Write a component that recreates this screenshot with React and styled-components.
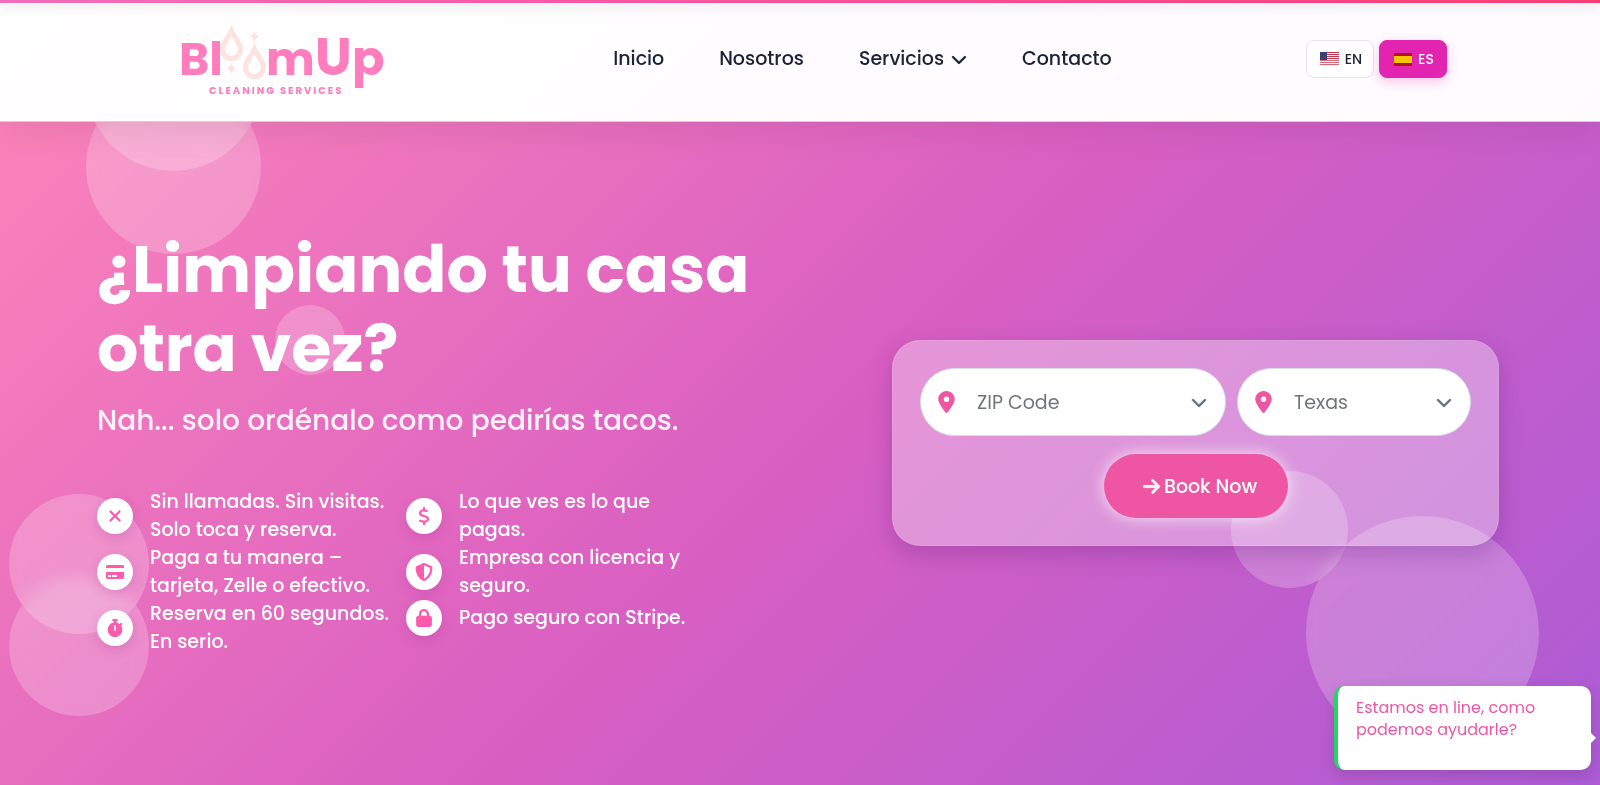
import React from "react";
import styled, { createGlobalStyle } from "styled-components";
import {
  FaXmark,
  FaDollarSign,
  FaShieldHalved,
  FaLock,
  FaArrowRight,
  FaStopwatch,
  FaChevronDown,
  FaLocationDot,
} from "react-icons/fa6";
import { FaCreditCard } from "react-icons/fa";

const GlobalStyle = createGlobalStyle`
  *, *::before, *::after { box-sizing: border-box; }
  body {
    margin: 0;
    font-family: Poppins, Inter, "Liberation Sans", sans-serif;
    color: #1a2238;
    overflow: hidden;
  }
  button, select { font-family: inherit; }
`;

const Page = styled.div`
  display: flex;
  flex-direction: column;
  min-height: 100vh;
  position: relative;
  overflow: hidden;
  background: linear-gradient(135deg, #fe86b9 0%, #d95fc2 52%, #a85bd7 104%);
`;

const Header = styled.header`
  position: relative;
  z-index: 3;
  height: 122px;
  background: linear-gradient(135deg, #fffefe, #fefbff);
  border-bottom: 1px solid rgba(214, 160, 200, 0.6);
  box-shadow: 0 8px 32px rgba(0, 0, 0, 0.08);
`;

const Strip = styled.div`
  height: 3px;
  background: linear-gradient(90deg, #f06eb8, #fb5299, #fb3d74);
  box-shadow: 0 3px 12px rgba(0, 0, 0, 0.18);
`;

const HeaderRow = styled.div`
  display: flex;
  align-items: flex-start;
  justify-content: space-between;
  max-width: 1320px;
  margin: 0 auto;
  padding: 0 13px 0 37px;
`;

const LogoLink = styled.a`
  display: block;
  padding-top: 17px;
  svg { display: block; }
`;

const Nav = styled.nav`
  display: flex;
  gap: 55px;
  padding: 42px 0 0 34px;
`;

const NavLink = styled.a`
  display: flex;
  align-items: center;
  gap: 7px;
  font-size: 19px;
  line-height: 28px;
  font-weight: 500;
  color: #1a2238;
  text-decoration: none;
`;

const LangGroup = styled.div`
  display: flex;
  gap: 5px;
  padding-top: 37px;
`;

const LangButton = styled.button`
  display: flex;
  align-items: center;
  justify-content: center;
  gap: 6px;
  width: 68px;
  height: 38px;
  padding: 0 0 0 2px;
  border-radius: 8px;
  border: 1px solid ${(p) => (p.$active ? "#e224b0" : "#e6e3e8")};
  background: ${(p) => (p.$active ? "#e224b0" : "#fff")};
  color: ${(p) => (p.$active ? "#fff" : "#1a2238")};
  box-shadow: ${(p) => (p.$active ? "0 4px 12px rgba(226, 36, 176, 0.25)" : "none")};
  font-size: 14px;
  font-weight: 500;
`;

const Hero = styled.main`
  position: relative;
  flex: 1;
  display: flex;
  align-items: flex-start;
`;

const Bubbles = styled.div`
  position: absolute;
  inset: 0;
`;

const Bubble = styled.span`
  position: absolute;
  left: ${(p) => p.$x}px;
  top: ${(p) => p.$y}px;
  width: ${(p) => p.$size}px;
  height: ${(p) => p.$size}px;
  border-radius: 50%;
  background: rgba(255, 255, 255, 0.22);
  backdrop-filter: blur(8px);
`;

const HeroGrid = styled.div`
  position: relative;
  width: 100%;
  display: grid;
  grid-template-columns: minmax(0, 1fr) minmax(0, 607px);
  gap: 56px;
  align-items: center;
  padding: 108px 101px 0 97px;
`;

const Title = styled.h1`
  margin: 0;
  font-size: 65px;
  line-height: 79px;
  font-weight: 700;
  color: #fff;
`;

const Subtitle = styled.p`
  margin: 13px 0 47px;
  font-size: 28px;
  line-height: 40px;
  font-weight: 500;
  color: rgba(255, 255, 255, 0.9);
`;

const Features = styled.div`
  display: grid;
  grid-template-columns: 1fr 1fr;
  gap: 6px;
  max-width: 612px;
`;

const FeatureList = styled.ul`
  list-style: none;
  margin: 0;
  padding: 0;
`;

const Feature = styled.li`
  display: flex;
  align-items: center;
  gap: 17px;
  font-size: 19px;
  line-height: 28px;
  font-weight: 500;
  color: #fff;
`;

const FeatureIcon = styled.span`
  flex: none;
  display: flex;
  align-items: center;
  justify-content: center;
  width: 36px;
  height: 36px;
  border-radius: 50%;
  background: #fff;
  color: #ff5aac;
  box-shadow: 0 4px 12px rgba(160, 40, 140, 0.22);
  svg {
    width: auto;
    height: 18px;
  }
`;

const BookingCard = styled.form`
  display: flex;
  flex-direction: column;
  align-items: center;
  gap: 18px;
  padding: 27px;
  border: 1px solid rgba(255, 255, 255, 0.1);
  border-radius: 28px;
  background: rgba(255, 255, 255, 0.34);
  box-shadow: 0 8px 24px rgba(60, 10, 90, 0.22);
`;

const FieldRow = styled.div`
  display: grid;
  grid-template-columns: 306fr 234fr;
  gap: 11px;
  width: 100%;
`;

const Field = styled.label`
  position: relative;
  display: flex;
  align-items: center;
  height: 68px;
  border: 1px solid #d5dcea;
  border-radius: 34px;
  background: #fff;
  svg {
    position: absolute;
    width: auto;
    pointer-events: none;
  }
  svg:first-child {
    left: 17px;
    width: 17px;
    height: 22px;
    color: #ee56a4;
  }
  svg:last-child {
    right: 18px;
    height: 16px;
    color: #64707d;
    stroke: currentColor;
    stroke-width: 12px;
  }
`;

const Select = styled.select`
  appearance: none;
  width: 100%;
  height: 100%;
  padding: 0 48px 0 56px;
  border: 0;
  border-radius: 34px;
  background: transparent;
  color: #6f7479;
  font-size: 19px;
`;

const BookButton = styled.button`
  display: flex;
  align-items: center;
  justify-content: center;
  gap: 3px;
  width: 184px;
  height: 64px;
  padding: 0 0 0 8px;
  border: 0;
  border-radius: 32px;
  background: #ee56a4;
  color: #fff;
  font-size: 19px;
  font-weight: 500;
  box-shadow: 0 0 16px rgba(255, 255, 255, 0.75);
  svg {
    stroke: currentColor;
    stroke-width: 12px;
  }
`;

const ChatBubble = styled.aside`
  position: absolute;
  z-index: 4;
  right: 9px;
  bottom: 15px;
  width: 257px;
  height: 84px;
  padding: 11px 18px;
  border-left: 4px solid #25d366;
  border-radius: 10px;
  background: #fff;
  color: #ee56a4;
  font-size: 16px;
  line-height: 22px;
  box-shadow: 0 4px 14px rgba(0, 0, 0, 0.15);
  &::after {
    content: "";
    position: absolute;
    right: -5px;
    top: 46px;
    border: 6px solid transparent;
    border-right-width: 0;
    border-left-color: #fff;
  }
`;

const Logo = () => (
  <svg width="208" height="82" viewBox="0 0 208 82" role="img" aria-label="BloomUp Cleaning Services">
    <g fill="#ff7dbd" fontFamily="Poppins, Lato, sans-serif" fontWeight="700">
      <text x="2" y="55" fontSize="46">Bl</text>
      <text x="89" y="55" fontSize="46">m</text>
      <text x="138" y="55" fontSize="52">U</text>
      <text x="175" y="55" fontSize="48">p</text>
    </g>
    <g fill="none" stroke="#fde3df" strokeWidth="5">
      <path d="M54.500 11 C51 19 45.500 23 45.500 29.500 a9 9 0 0 0 18 0 C63.500 23 58 19 54.500 11 Z" />
      <path d="M77.500 29 C74 37 68.500 41 68.500 47.500 a9 9 0 0 0 18 0 C86.500 41 81 37 77.500 29 Z" />
    </g>
    <g fill="#fde3df">
      <path d="M77.500 11 Q78.500 15.500 82.500 16.500 Q78.500 17.500 77.500 22 Q76.500 17.500 72.500 16.500 Q76.500 15.500 77.500 11Z" />
      <path d="M54.500 43 Q55.500 47.500 59.500 48.500 Q55.500 49.500 54.500 54 Q53.500 49.500 49.500 48.500 Q53.500 47.500 54.500 43Z" />
    </g>
    <text x="32" y="74" fill="#ff7dbd" fontFamily="Poppins, Lato, sans-serif" fontWeight="700" fontSize="10" letterSpacing="2">
      CLEANING SERVICES
    </text>
  </svg>
);

const FlagUS = () => (
  <svg width="19" height="14" viewBox="0 0 19 14" aria-hidden="true">
    <rect width="19" height="14" fill="#f3eef0" />
    {[0, 1, 2, 3, 4, 5, 6].map((i) => (
      <rect key={i} y={i * 2} width="19" height="1" fill={i < 4 ? "#bf3a50" : "#cf6c7c"} />
    ))}
    <rect width="7" height="8" fill="#3f3d72" />
  </svg>
);

const FlagES = () => (
  <svg width="18" height="13" viewBox="0 0 18 13" aria-hidden="true">
    <rect width="18" height="13" fill="#b0151f" />
    <rect y="3" width="18" height="7" fill="#f5c400" />
  </svg>
);

const bubbles = [
  { x: 86, y: -43, size: 175 },
  { x: 86, y: -126, size: 175 },
  { x: 275, y: 183, size: 70 },
  { x: 9, y: 454, size: 140 },
  { x: 9, y: 372, size: 140 },
  { x: 1306, y: 394, size: 233 },
  { x: 1231, y: 349, size: 117 },
];

const featureColumns = [
  [
    { icon: <FaXmark />, text: "Sin llamadas. Sin visitas. Solo toca y reserva." },
    { icon: <FaCreditCard />, text: "Paga a tu manera – tarjeta, Zelle o efectivo." },
    { icon: <FaStopwatch />, text: "Reserva en 60 segundos. En serio." },
  ],
  [
    { icon: <FaDollarSign />, text: "Lo que ves es lo que pagas." },
    { icon: <FaShieldHalved />, text: "Empresa con licencia y seguro." },
    { icon: <FaLock />, text: "Pago seguro con Stripe." },
  ],
];

export default function App() {
  return (
    <Page>
      <GlobalStyle />
      <Header>
        <Strip />
        <HeaderRow>
          <LogoLink href="#inicio"><Logo /></LogoLink>
          <Nav>
            <NavLink href="#inicio">Inicio</NavLink>
            <NavLink href="#nosotros">Nosotros</NavLink>
            <NavLink href="#servicios">Servicios <FaChevronDown size={16} stroke="currentColor" strokeWidth={8} /></NavLink>
            <NavLink href="#contacto">Contacto</NavLink>
          </Nav>
          <LangGroup>
            <LangButton type="button"><FlagUS />EN</LangButton>
            <LangButton type="button" $active><FlagES />ES</LangButton>
          </LangGroup>
        </HeaderRow>
      </Header>
      <Hero>
        <Bubbles aria-hidden="true">
          {bubbles.map((b, i) => (
            <Bubble key={i} $x={b.x} $y={b.y} $size={b.size} />
          ))}
        </Bubbles>
        <HeroGrid>
          <section>
            <Title>¿Limpiando tu casa otra vez?</Title>
            <Subtitle>Nah... solo ordénalo como pedirías tacos.</Subtitle>
            <Features>
              {featureColumns.map((items, c) => (
                <FeatureList key={c}>
                  {items.map((f) => (
                    <Feature key={f.text}>
                      <FeatureIcon>{f.icon}</FeatureIcon>
                      <span>{f.text}</span>
                    </Feature>
                  ))}
                </FeatureList>
              ))}
            </Features>
          </section>
          <BookingCard onSubmit={(e) => e.preventDefault()}>
            <FieldRow>
              <Field>
                <FaLocationDot />
                <Select aria-label="ZIP Code"><option>ZIP Code</option></Select>
                <FaChevronDown />
              </Field>
              <Field>
                <FaLocationDot />
                <Select aria-label="Estado"><option>Texas</option></Select>
                <FaChevronDown />
              </Field>
            </FieldRow>
            <BookButton type="submit"><FaArrowRight />Book Now</BookButton>
          </BookingCard>
        </HeroGrid>
      </Hero>
      <ChatBubble>Estamos en line, como podemos ayudarle?</ChatBubble>
    </Page>
  );
}
